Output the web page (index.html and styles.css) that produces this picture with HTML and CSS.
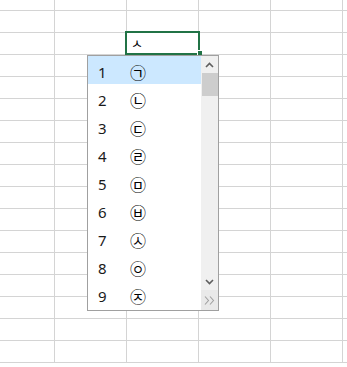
FILE: index.html
```html
<!DOCTYPE html>
<html lang="ko">
<head>
    <meta charset="UTF-8">
    <title>Sheet</title>
    <link rel="stylesheet" href="styles.css">
</head>
<body>
    <div class="viewport">
        <div id="sheet" class="sheet"></div>
    </div>

    <template id="activeTpl">
        <div class="cell active">
            <span class="cell-text">ㅅ</span>
            <div class="select-box"></div>
            <div class="fill-handle"></div>
            <div class="dropdown">
                <ul class="list" id="list"></ul>
                <div class="scrollbar">
                    <div class="sb-btn">
                        <svg width="9" height="6" viewBox="0 0 9 6"><polyline points="1,5 4.5,1.5 8,5" fill="none" stroke="#5f5f5f" stroke-width="1.6"/></svg>
                    </div>
                    <div class="sb-thumb"></div>
                    <div class="sb-track"></div>
                    <div class="sb-btn">
                        <svg width="9" height="6" viewBox="0 0 9 6"><polyline points="1,1 4.5,4.5 8,1" fill="none" stroke="#5f5f5f" stroke-width="1.6"/></svg>
                    </div>
                    <div class="sb-more">
                        <svg width="11" height="9" viewBox="0 0 11 9"><polyline points="1,0.5 4.5,4.5 1,8.5" fill="none" stroke="#a0a0a0" stroke-width="1.1"/><polyline points="6,0.5 9.5,4.5 6,8.5" fill="none" stroke="#a0a0a0" stroke-width="1.1"/></svg>
                    </div>
                </div>
            </div>
        </div>
    </template>

    <script>
        const cols = 6;
        const rows = 17;
        const marks = ['㉠', '㉡', '㉢', '㉣', '㉤', '㉥', '㉦', '㉧', '㉨'];
        const sheet = document.getElementById('sheet');

        for (let r = 0; r < rows; r++) {
            for (let c = 0; c < cols; c++) {
                if (r === 2 && c === 2) {
                    const tpl = document.getElementById('activeTpl');
                    sheet.appendChild(tpl.content.cloneNode(true));
                } else {
                    const div = document.createElement('div');
                    div.className = 'cell';
                    sheet.appendChild(div);
                }
            }
        }

        // candidate list
        const list = document.getElementById('list');
        marks.forEach((m, i) => {
            const li = document.createElement('li');
            li.className = i === 0 ? 'row selected' : 'row';
            li.innerHTML = `<span class="num">${i + 1}</span><span class="mark">${m}</span>`;
            list.appendChild(li);
        });
    </script>
</body>
</html>
```

FILE: styles.css
```css
body {
    margin: 0;
    background-color: #ffffff;
    font-family: "Noto Sans", "Noto Sans CJK KR", sans-serif;
}
.viewport {
    width: 100vw;
    height: 100vh;
    overflow: hidden;
}
.sheet {
    display: grid;
    grid-template-columns: repeat(6, 72px);
    grid-auto-rows: 22px;
    margin: -11px 0 0 -17px;
}
.cell {
    box-sizing: border-box;
    border-right: 1px solid #d4d4d4;
    border-bottom: 1px solid #d4d4d4;
}
.cell.active {
    position: relative;
    padding-left: 4px;
}
.cell-text {
    display: block;
    font-family: "Noto Sans CJK KR", sans-serif;
    font-size: 13px;
    line-height: 20px;
    color: #000;
}
.select-box {
    position: absolute;
    left: -2px;
    top: -2px;
    width: 75px;
    height: 24px;
    box-sizing: border-box;
    border: 2px solid #217346;
}
.fill-handle {
    position: absolute;
    left: 70px;
    top: 17px;
    width: 5px;
    height: 5px;
    box-sizing: border-box;
    background-color: #217346;
    border-left: 1px solid #fff;
    border-top: 1px solid #fff;
}
.dropdown {
    position: absolute;
    left: -40px;
    top: 22px;
    width: 132px;
    height: 256px;
    box-sizing: border-box;
    border: 1px solid #a0a0a0;
    background-color: #fff;
    display: flex;
    z-index: 2;
}
.list {
    list-style: none;
    margin: 0;
    padding: 0;
    width: 113px;
}
.row {
    height: 28px;
    display: flex;
    align-items: center;
    padding: 3px 0 0 10px;
    box-sizing: border-box;
    color: #1a1a1a;
}
.row.selected {
    background-color: #cce8ff;
}
.num {
    width: 32px;
    font-size: 15px;
}
.mark {
    font-family: "Noto Sans CJK KR", sans-serif;
    font-size: 16px;
    color: #000;
}
.scrollbar {
    width: 17px;
    background-color: #f0f0f0;
    display: flex;
    flex-direction: column;
}
.sb-btn {
    height: 17px;
    display: flex;
    align-items: center;
    justify-content: center;
}
.sb-thumb {
    height: 23px;
    margin-left: 1px;
    background-color: #cdcdcd;
}
.sb-track {
    flex: 1;
}
.sb-more {
    height: 20px;
    display: flex;
    align-items: center;
    justify-content: center;
    background-color: #e9e9e9;
}
```
